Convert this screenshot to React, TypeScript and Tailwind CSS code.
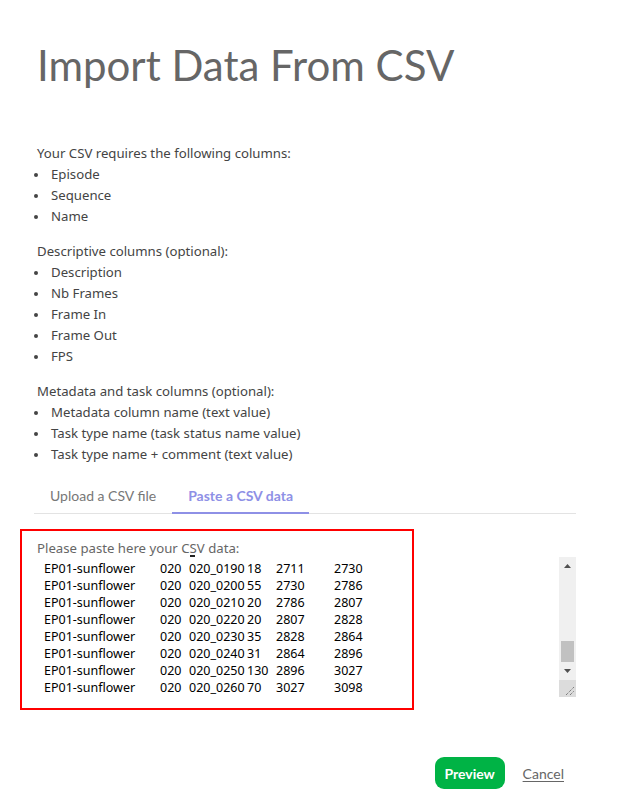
import React from "react";

const required = ["Episode", "Sequence", "Name"];
const descriptive = ["Description", "Nb Frames", "Frame In", "Frame Out", "FPS"];
const metadata = [
  "Metadata column name (text value)",
  "Task type name (task status name value)",
  "Task type name + comment (text value)",
];

const rows = [
  ["EP01-sunflower", "020", "020_0190", "18", "2711", "2730"],
  ["EP01-sunflower", "020", "020_0200", "55", "2730", "2786"],
  ["EP01-sunflower", "020", "020_0210", "20", "2786", "2807"],
  ["EP01-sunflower", "020", "020_0220", "20", "2807", "2828"],
  ["EP01-sunflower", "020", "020_0230", "35", "2828", "2864"],
  ["EP01-sunflower", "020", "020_0240", "31", "2864", "2896"],
  ["EP01-sunflower", "020", "020_0250", "130", "2896", "3027"],
  ["EP01-sunflower", "020", "020_0260", "70", "3027", "3098"],
];

function Group({ title, items }: { title: string; items: string[] }) {
  return (
    <div className="mb-[14px]">
      <p className="leading-[21px]">{title}</p>
      <ul>
        {items.map((item) => (
          <li key={item} className="flex items-center leading-[21px]">
            <span className="w-[4px] h-[4px] rounded-full bg-[#444] ml-[-3px] mr-[13px]" />
            <span>{item}</span>
          </li>
        ))}
      </ul>
    </div>
  );
}

export default function App() {
  return (
    <div
      className="relative min-h-screen bg-white text-[#444] px-[37px] pb-10"
      style={{ fontFamily: '"Noto Sans", "Open Sans", sans-serif' }}
    >
      <h1
        className="pt-[38px] text-[42px] leading-[54px] text-[#666]"
        style={{ fontFamily: "Lato, sans-serif" }}
      >
        Import Data From CSV
      </h1>

      {/* Column help */}
      <div className="mt-[51px] text-[13.2px]">
        <Group title="Your CSV requires the following columns:" items={required} />
        <Group title="Descriptive columns (optional):" items={descriptive} />
        <Group title="Metadata and task columns (optional):" items={metadata} />
      </div>

      {/* Tabs */}
      <div
        className="mt-[16px] mr-[4px] flex border-b border-[#e3e3e3] text-[14px] ml-[-3px]"
        style={{ fontFamily: "Lato, sans-serif" }}
      >
        <button className="px-[16px] pt-[4px] pb-[7px] text-[#777]">Upload a CSV file</button>
        <button className="px-[16px] pt-[4px] pb-[6px] font-bold text-[#8e90e6] border-b-2 border-[#8e90e6] mb-[-1px]">
          Paste a CSV data
        </button>
      </div>

      {/* Paste area */}
      <div className="mt-[25px] mr-[4px] text-[13.2px]">
        <p className="leading-[18px] text-[#666]">Please paste here your CSV data:</p>
        <div className="relative h-[140px] flex">
          <div className="flex-1 pl-[7px] pt-[3px] text-[12.5px] text-black leading-[17px] overflow-hidden">
            {rows.map((r, i) => (
              <div key={i} className="flex whitespace-nowrap">
                <span className="w-[116px]">{r[0]}</span>
                <span className="w-[29px]">{r[1]}</span>
                <span className="w-[58px]">{r[2]}</span>
                <span className="w-[29px]">{r[3]}</span>
                <span className="w-[58px]">{r[4]}</span>
                <span>{r[5]}</span>
              </div>
            ))}
          </div>
          {/* scrollbar */}
          <div className="w-[17px] flex flex-col bg-[#f0f0f0]">
            <div className="h-[17px] flex items-center justify-center">
              <svg width="7" height="4" viewBox="0 0 7 4">
                <path d="M0 4 L3.5 0 L7 4 Z" fill="#505050" />
              </svg>
            </div>
            <div className="flex-1 flex flex-col justify-end px-[2px]">
              <div className="h-[21px] bg-[#c1c1c1]" />
            </div>
            <div className="h-[18px] flex items-center justify-center">
              <svg width="7" height="4" viewBox="0 0 7 4">
                <path d="M0 0 L3.5 4 L7 0 Z" fill="#505050" />
              </svg>
            </div>
            <div className="h-[17px] bg-[#dcdcdc] flex items-end justify-end p-[2px]">
              <svg width="10" height="10" viewBox="0 0 10 10">
                <path d="M2 10 L10 2 M6 10 L10 6" stroke="#555" strokeWidth="1" strokeDasharray="1 1" />
              </svg>
            </div>
          </div>
        </div>
      </div>

      {/* Actions */}
      <div
        className="mt-[60px] flex items-center justify-end gap-[18px] pr-[16px]"
        style={{ fontFamily: "Lato, sans-serif" }}
      >
        <button className="h-[32px] w-[70px] rounded-[9px] bg-[#00b345] text-white text-[14px] font-bold">
          Preview
        </button>
        <button className="text-[14px] text-[#666] underline underline-offset-2">Cancel</button>
      </div>

      {/* highlight overlay */}
      <div className="absolute left-[20px] top-[529px] w-[394px] h-[181px] border-2 border-[#ff0000] pointer-events-none" />
      <div className="absolute left-[190px] top-[555px] w-[5px] h-[2px] bg-[#222]" />
    </div>
  );
}
